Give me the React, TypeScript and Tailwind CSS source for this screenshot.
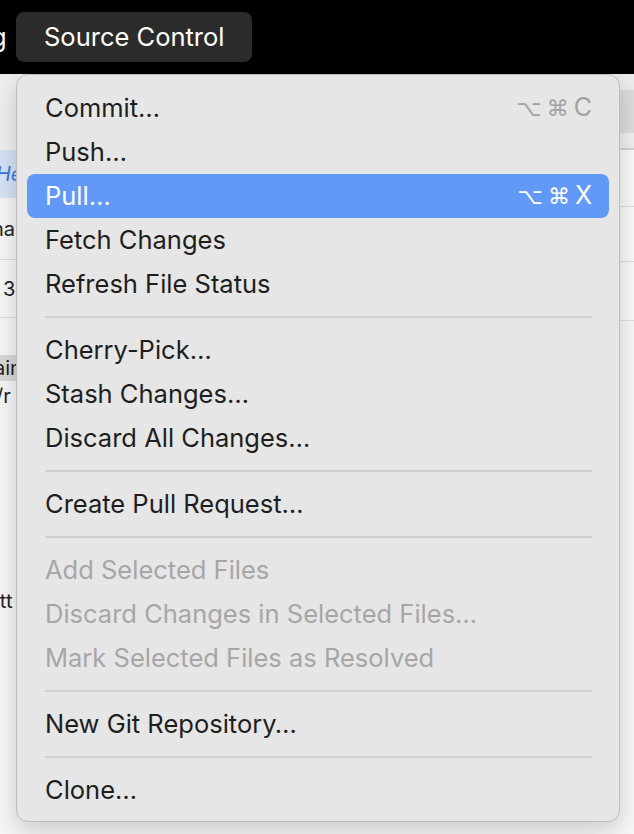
import React from "react";

type Item =
  | { type: "sep" }
  | { type: "item"; label: string; shortcut?: string[]; active?: boolean; disabled?: boolean };

const items: Item[] = [
  { type: "item", label: "Commit…", shortcut: ["⌥", "⌘", "C"] },
  { type: "item", label: "Push…" },
  { type: "item", label: "Pull…", shortcut: ["⌥", "⌘", "X"], active: true },
  { type: "item", label: "Fetch Changes" },
  { type: "item", label: "Refresh File Status" },
  { type: "sep" },
  { type: "item", label: "Cherry-Pick…" },
  { type: "item", label: "Stash Changes…" },
  { type: "item", label: "Discard All Changes…" },
  { type: "sep" },
  { type: "item", label: "Create Pull Request…" },
  { type: "sep" },
  { type: "item", label: "Add Selected Files", disabled: true },
  { type: "item", label: "Discard Changes in Selected Files…", disabled: true },
  { type: "item", label: "Mark Selected Files as Resolved", disabled: true },
  { type: "sep" },
  { type: "item", label: "New Git Repository…" },
  { type: "sep" },
  { type: "item", label: "Clone…" },
];

export default function App() {
  return (
    <div
      className="relative w-[634px] h-[834px] overflow-hidden bg-[#f6f6f6]"
      style={{ fontFamily: "Inter, 'Noto Sans', sans-serif" }}
    >
      {/* Menu bar */}
      <div className="h-[74px] bg-black flex items-center">
        <span className="text-white text-[25.5px] -ml-[9px] w-[25px] leading-none">g</span>
        <div className="h-[50px] px-[28px] rounded-[8px] bg-[#2b2b2b] flex items-center text-white text-[25.5px]">
          Source Control
        </div>
      </div>

      {/* Window behind the menu */}
      <div className="flex h-[760px]">
        <div className="w-[40px] flex flex-col text-[20px] text-[#222] whitespace-nowrap overflow-hidden">
          <div className="h-[76px] bg-[#efefef]" />
          <div className="h-[48px] bg-[#d6e2f5] flex items-center italic text-[#3a74e0] -indent-[4px]">He</div>
          <div className="h-[62px] flex items-center border-b border-[#dcdcdc] -indent-[8px]">na</div>
          <div className="h-[58px] flex items-center border-b border-[#dcdcdc] pl-[3px]">3</div>
          <div className="h-[37px]" />
          <div className="h-[26px] bg-[#d8d8d8] flex items-center -indent-[6px]">ain</div>
          <div className="h-[30px] flex items-center -indent-[4px]">/r</div>
          <div className="h-[175px]" />
          <div className="h-[30px] flex items-center -indent-[12px]">utt</div>
        </div>
        <div className="flex-1" />
        <div className="w-[40px] flex flex-col">
          <div className="h-[16px] bg-[#ececec]" />
          <div className="h-[43px] bg-[#dcdcdc]" />
          <div className="h-[17px] bg-[#efefef] border-b-2 border-[#d2d2d2]" />
          <div className="h-[57px] bg-[#f9f9f9] border-b border-[#dedede]" />
          <div className="h-[55px] bg-[#f9f9f9] border-b border-[#dedede]" />
          <div className="h-[59px] bg-[#f9f9f9] border-b border-[#dedede]" />
          <div className="flex-1 bg-[#f7f7f7]" />
        </div>
      </div>

      {/* Dropdown menu */}
      <div className="absolute left-[16px] top-[74px] w-[604px] rounded-[12px] border border-[#bdbdbd] bg-[#e6e6e6] pt-[11px] pb-[9px] px-[10px] shadow-[0_8px_24px_rgba(0,0,0,0.18)]">
        {items.map((it, i) =>
          it.type === "sep" ? (
            <div key={i} className="h-[22px] flex items-center pl-[18px] pr-[17px]">
              <div className="h-[2px] w-full bg-[#cfcfcf]" />
            </div>
          ) : (
            <div
              key={i}
              className={
                "h-[44px] flex items-center justify-between pl-[18px] pr-[17px] rounded-[8px] text-[25.5px] " +
                (it.active ? "bg-[#6299f7] text-white" : it.disabled ? "text-[#a6a6a6]" : "text-[#1e1e1e]")
              }
            >
              <span>{it.label}</span>
              {it.shortcut && (
                <span
                  className={
                    "flex items-center gap-[5px] text-[22px] " + (it.active ? "text-white" : "text-[#a2a2a2]")
                  }
                  style={{ fontFamily: "'DejaVu Sans', Inter, sans-serif" }}
                >
                  {it.shortcut.map((s, j) => (
                    <span key={j} style={j === 2 ? { fontFamily: "Inter, sans-serif", fontSize: "25px" } : undefined}>
                      {s}
                    </span>
                  ))}
                </span>
              )}
            </div>
          )
        )}
      </div>
    </div>
  );
}
